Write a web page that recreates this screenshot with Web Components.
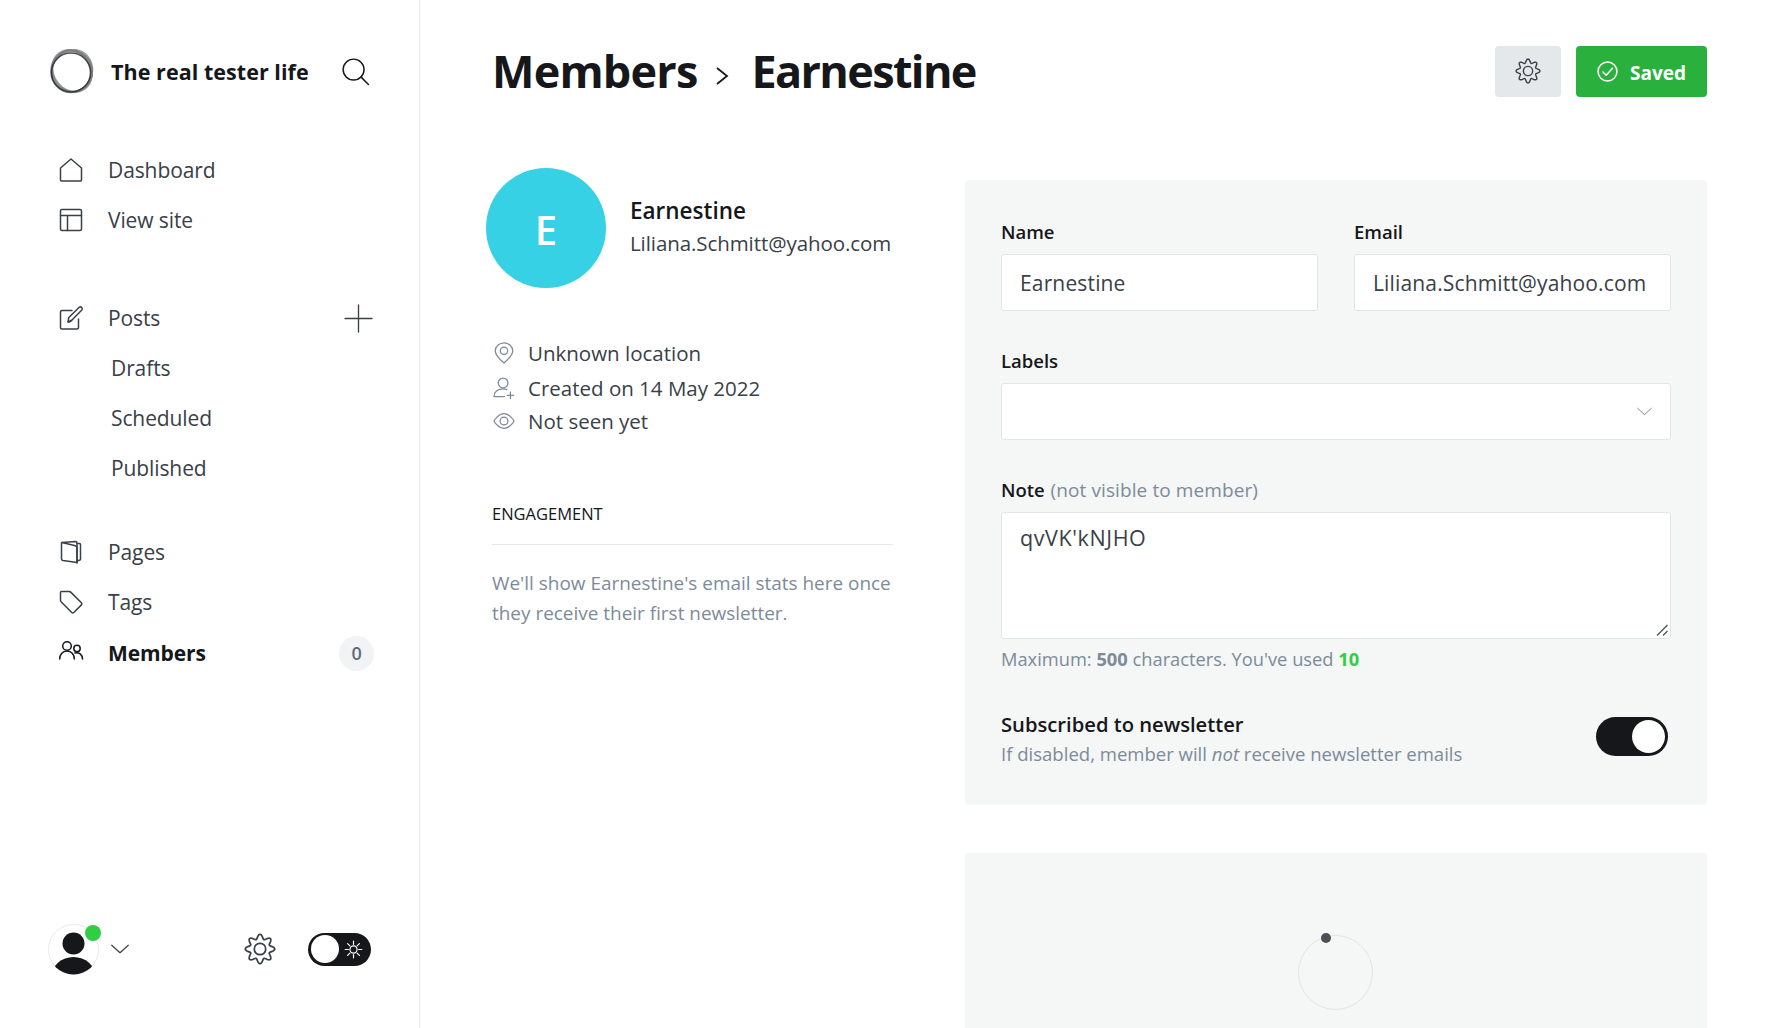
<!DOCTYPE html>
<html lang="en">
<head>
<meta charset="utf-8">
<title>Members - Earnestine</title>
<style>
  html, body { margin: 0; height: 100%; overflow: hidden; background: #fff; }
  body { font-family: "Open Sans", "Noto Sans", sans-serif; color: #15171a; }
</style>
</head>
<body>
<ghost-app>
  <side-nav slot="nav"></side-nav>
  <member-page slot="main"></member-page>
</ghost-app>

<script>
// wavy cog outline, sampled from a polar curve
const cogPath = () => {
  const pts = [];
  for (let i = 0; i < 96; i++) {
    const a = (i / 96) * Math.PI * 2;
    const r = 9.3 + 1.75 * Math.cos(8 * a);
    pts.push((12 + r * Math.cos(a)).toFixed(2) + " " + (12 + r * Math.sin(a)).toFixed(2));
  }
  return "M" + pts.join("L") + "Z";
};

const ICONS = {
  home: `<path d="M1.5 22V10L12 1l10.5 9v12a1 1 0 0 1-1 1h-19a1 1 0 0 1-1-1z"/>`,
  site: `<rect x="1.5" y="1.5" width="21" height="21" rx="1.5"/><path d="M1.5 7.5h21M8.5 7.5v15"/>`,
  posts: `<path d="M13 4.5H3a1.5 1.5 0 0 0-1.5 1.5v15.5A1.5 1.5 0 0 0 3 23h15a1.5 1.5 0 0 0 1.5-1.5V13"/><path d="M10 16l-1-.1.8-4.4L20 1.5c.8-.7 2-.7 2.7.1.7.8.7 2-.1 2.7L12.500 14.500z" /><path d="M9 16l3.500-1.500"/>`,
  pages: `<path d="M3 2.500 16.500 1.500c1 0 1.500.5 1.500 1.500v19.500L4 20.500c-1-.2-1.500-.8-1.500-1.800V3z"/><path d="M3 2.500 15.500 5.500c1.500.4 2.500 1 2.500 2.500v15"/><path d="M18 3.500h2.500c.7 0 1 .4 1 1v14.500c0 .8-.5 1.200-1.200 1.300L18 21"/>`,
  tags: `<path d="M1.500 2.500c0-.6.4-1 1-1h7.700c.6 0 1.100.2 1.500.6l10.700 10.700c.6.600.6 1.500 0 2.100l-7.600 7.600c-.6.6-1.500.6-2.100 0L2.100 11.800c-.4-.4-.6-.9-.6-1.500z"/>`,
  members: `<circle cx="8" cy="5" r="4.300"/><path d="M.7 18c0-4.500 3-8 7.300-8s7.300 3.500 7.300 8"/><circle cx="18" cy="7.500" r="3.200"/><path d="M16 12c3.800-1 7.500 1.500 7.500 6"/>`,
  search: `<circle cx="10.300" cy="10.300" r="9.300"/><path d="M17 17l6.500 6.500"/>`,
  plus: `<path d="M12 0v24M0 12h24"/>`,
  chevron: `<path d="M1 7l11 10L23 7"/>`,
  cog: `<path d="${cogPath()}"/><circle cx="12" cy="12" r="4.300"/>`,
  pin: `<path d="M12 23S2.500 14.500 2.500 9.700a9.500 8.700 0 0 1 19 0C21.500 14.500 12 23 12 23z"/><circle cx="12" cy="9.500" r="4"/>`,
  useradd: `<circle cx="11" cy="6.500" r="5.300"/><path d="M1 21.500c0-5 4-8.500 10-8.500 1.500 0 3 .2 4 .7M1 21.500h11.500M19 16.500v7M15.500 20h7"/>`,
  eye: `<path d="M1 12s4.500-8 11-8 11 8 11 8-4.500 8-11 8S1 12 1 12z"/><circle cx="12" cy="12" r="4.200"/>`,
  check: `<circle cx="12" cy="12" r="10.800"/><path d="M6.800 12.500l3.700 3.700 7.200-8"/>`,
  sun: `<circle cx="12" cy="12" r="4.500"/><path d="M12 1.500v4M12 18.500v4M1.500 12h4M18.500 12h4M4.500 4.500l3 3M16.500 16.500l3 3M19.500 4.500l-3 3M7.500 16.500l-3 3"/>`
};

class UiIcon extends HTMLElement {
  connectedCallback() {
    const name = this.getAttribute("name");
    const size = this.getAttribute("size") || 24;
    const weight = this.getAttribute("weight") || 1.5;
    this.attachShadow({mode: "open"}).innerHTML = `
      <style>
        :host { display: inline-flex; flex: none; width: ${size}px; height: ${size}px; }
        svg { width: 100%; height: 100%; overflow: visible; fill: none; stroke: currentColor; stroke-width: ${weight}; stroke-linecap: round; stroke-linejoin: round; }
      </style>
      <svg viewBox="0 0 24 24">${ICONS[name]}</svg>`;
  }
}

class GhostApp extends HTMLElement {
  constructor() {
    super();
    this.attachShadow({mode: "open"}).innerHTML = `
      <style>
        :host { display: grid; grid-template-columns: 420px 1fr; height: 100vh; overflow: hidden; }
      </style>
      <slot name="nav"></slot>
      <slot name="main"></slot>`;
  }
}

class NavItem extends HTMLElement {
  constructor() {
    super();
    this.attachShadow({mode: "open"}).innerHTML = `
      <style>
        :host { display: flex; align-items: center; height: 50px; padding-left: 59px; color: #394047; font-size: 21px; letter-spacing: -.1px; }
        :host([sub]) { padding-left: 111px; }
        :host([active]) { color: #15171a; font-weight: 700; margin-top: 1px; }
        .icon { display: inline-flex; width: 49px; flex: none; }
        :host([sub]) .icon { display: none; }
        .end { margin-left: auto; display: inline-flex; align-items: center; }
      </style>
      <span class="icon"><slot name="icon"></slot></span>
      <span><slot></slot></span>
      <span class="end"><slot name="end"></slot></span>`;
  }
}

class SideNav extends HTMLElement {
  constructor() {
    super();
    this.attachShadow({mode: "open"}).innerHTML = `
      <style>
        :host { display: flex; flex-direction: column; height: 100vh; box-sizing: border-box; border-right: 1px solid #e6e9eb; padding-top: 50px; overflow: hidden; }
        .brand { display: flex; align-items: center; height: 44px; padding-left: 49px; padding-right: 50px; }
        .logo { width: 45px; height: 45px; flex: none; margin-top: -1px; }
        .logo ellipse { fill: none; stroke: #77797c; stroke-opacity: .7; stroke-width: 2; }
        .title { margin: -2px 0 0 17px; font-size: 21.500px; font-weight: 700; letter-spacing: .05px; color: #15171a; white-space: nowrap; flex: 1; }
        .search { color: #15171a; margin-top: -2px; }
        .first { margin-top: 51px; }
        .second { margin-top: 48px; }
        .third { margin-top: 34px; }
        .plus { color: #394047; margin-right: 47px; }
        .badge { display: flex; align-items: center; justify-content: center; width: 35px; height: 35px; margin-right: 45px; border-radius: 50%; background: #f1f3f4; color: #5e6b78; font-size: 18px; font-weight: 600; }
        .foot { margin-top: auto; display: flex; align-items: center; height: 52px; padding: 0 48px 53px 48px; }
        .user { position: relative; width: 51px; height: 51px; flex: none; }
        .user svg { width: 100%; height: 100%; display: block; }
        .dot { position: absolute; right: -2px; top: 1px; width: 16px; height: 16px; border-radius: 50%; background: #30cf43; }
        .chev { margin-left: 12px; color: #394047; }
        .cog { margin-left: auto; color: #394047; margin-right: 32px; }
        .mode { width: 63px; height: 33px; box-sizing: border-box; border-radius: 17px; background: #15171a; display: flex; align-items: center; padding: 0 8px 0 3px; justify-content: space-between; color: #fff; }
        .mode i { width: 28px; height: 28px; border-radius: 50%; background: #fff; display: block; }
      </style>
      <div class="brand">
        <svg class="logo" viewBox="0 0 45 45">
          <ellipse cx="23" cy="22" rx="20" ry="21.500" transform="rotate(25 23 22)"/>
          <ellipse cx="23" cy="22" rx="18.500" ry="22" transform="rotate(-35 23 22)"/>
          <ellipse cx="23" cy="22" rx="21" ry="19.500" transform="rotate(60 23 22)"/>
          <ellipse cx="22.500" cy="22.500" rx="20.500" ry="20.500"/>
          <circle cx="22" cy="23.500" r="19.500" fill="none" stroke="#2a2c2f" stroke-opacity=".85" stroke-width="1.500"/>
        </svg>
        <span class="title">The real tester life</span>
        <ui-icon class="search" name="search" size="27" weight="1.300"></ui-icon>
      </div>
      <div class="first">
        <nav-item><ui-icon slot="icon" name="home"></ui-icon>Dashboard</nav-item>
        <nav-item><ui-icon slot="icon" name="site"></ui-icon>View site</nav-item>
      </div>
      <div class="second">
        <nav-item><ui-icon slot="icon" name="posts"></ui-icon>Posts<ui-icon class="plus" slot="end" name="plus" size="27" weight="1.200"></ui-icon></nav-item>
        <nav-item sub>Drafts</nav-item>
        <nav-item sub>Scheduled</nav-item>
        <nav-item sub>Published</nav-item>
      </div>
      <div class="third">
        <nav-item><ui-icon slot="icon" name="pages"></ui-icon>Pages</nav-item>
        <nav-item><ui-icon slot="icon" name="tags"></ui-icon>Tags</nav-item>
        <nav-item active><ui-icon slot="icon" name="members"></ui-icon>Members<span class="badge" slot="end">0</span></nav-item>
      </div>
      <div class="foot">
        <div class="user">
          <svg viewBox="0 0 51 51">
            <defs><clipPath id="uc"><circle cx="25.500" cy="25.500" r="25"/></clipPath></defs>
            <circle cx="25.500" cy="25.500" r="25" fill="#fff" stroke="#e8e8e8"/>
            <circle cx="25.500" cy="19.500" r="11" fill="#15171a"/>
            <ellipse cx="25.500" cy="53" rx="22" ry="20" fill="#15171a" clip-path="url(#uc)"/>
          </svg>
          <span class="dot"></span>
        </div>
        <ui-icon class="chev" name="chevron" size="18" weight="1.600"></ui-icon>
        <ui-icon class="cog" name="cog" size="32" weight="1.300"></ui-icon>
        <span class="mode"><i></i><ui-icon name="sun" size="19" weight="1.500"></ui-icon></span>
      </div>`;
  }
}

class PageHeader extends HTMLElement {
  constructor() {
    super();
    this.attachShadow({mode: "open"}).innerHTML = `
      <style>
        :host { display: flex; align-items: center; height: 143px; }
        h1 { margin: 0; padding-bottom: 2px; display: flex; align-items: center; font-size: 45px; font-weight: 700; letter-spacing: -.8px; color: #15171a; flex: 1; }
        .crumb { letter-spacing: -1.650px; }
        .sep { margin: 11px 22px 0 18px; color: #15171a; display: inline-flex; }
        .actions { display: flex; gap: 15px; }
        button { font: inherit; border: 0; border-radius: 4px; height: 51px; padding: 0; display: inline-flex; align-items: center; justify-content: center; }
        .cfg { width: 66px; background: #e5e8eb; color: #394047; }
        .cfg ui-icon { margin-top: -2px; }
        .saved { width: 131px; background: #2ab13d; color: #fff; font-size: 19px; font-weight: 700; gap: 12px; line-height: 1; padding-top: 3px; box-sizing: border-box; }
        .saved ui-icon { margin-top: -4px; }
      </style>
      <h1>Members<span class="sep"><svg width="14" height="20" viewBox="0 0 14 20" fill="none" stroke="currentColor" stroke-width="1.800"><path d="M2 2l10 8-10 8"/></svg></span><span class="crumb">Earnestine</span></h1>
      <div class="actions">
        <button class="cfg" aria-label="Settings"><ui-icon name="cog" size="26" weight="1.300"></ui-icon></button>
        <button class="saved"><ui-icon name="check" size="21" weight="1.700"></ui-icon>Saved</button>
      </div>`;
  }
}

class MemberSummary extends HTMLElement {
  constructor() {
    super();
    this.attachShadow({mode: "open"}).innerHTML = `
      <style>
        :host { display: block; }
        .who { display: flex; align-items: center; margin: -12px 0 0 -6px; }
        .avatar { width: 120px; height: 120px; box-sizing: border-box; padding-top: 2px; flex: none; border-radius: 50%; background: #36d1e4; color: #fff; display: flex; align-items: center; justify-content: center; font-size: 40px; font-weight: 600; }
        .text { margin: 0 0 0 24px; }
        .name { font-size: 22.500px; font-weight: 600; line-height: 30px; color: #15171a; }
        .mail { font-size: 20.500px; line-height: 34px; color: #394047; letter-spacing: -.08px; white-space: nowrap; }
        ul { list-style: none; margin: 48px 0 0 1px; padding: 0; color: #394047; font-size: 20.500px; }
        li { display: flex; align-items: center; height: 34px; }
        li:nth-child(2) { margin: 1px 0 -1px; }
        li span.ico { width: 35px; color: #7c8b9a; display: inline-flex; }
        h4 { margin: 64px 0 0 0; padding-bottom: 18px; border-bottom: 1px solid #e6e9eb; font-size: 16.500px; font-weight: 500; line-height: 24px; color: #15171a; text-transform: uppercase; }
        p { margin: 23px 0 0 0; font-size: 18.950px; line-height: 30px; color: #7c8b9a; }
      </style>
      <div class="who">
        <div class="avatar">E</div>
        <div class="text">
          <div class="name">Earnestine</div>
          <div class="mail">Liliana.Schmitt@yahoo.com</div>
        </div>
      </div>
      <ul>
        <li><span class="ico"><ui-icon name="pin" size="22" weight="1.400"></ui-icon></span>Unknown location</li>
        <li><span class="ico"><ui-icon name="useradd" size="22" weight="1.400"></ui-icon></span>Created on 14 May 2022</li>
        <li><span class="ico"><ui-icon name="eye" size="22" weight="1.400"></ui-icon></span>Not seen yet</li>
      </ul>
      <h4>Engagement</h4>
      <p>We'll show Earnestine's email stats here once they receive their first newsletter.</p>`;
  }
}

class FormField extends HTMLElement {
  constructor() {
    super();
    this.attachShadow({mode: "open"}).innerHTML = `
      <style>
        :host { display: block; margin-bottom: 39px; }
        :host([last]) { margin-bottom: 0; }
        label { display: block; height: 24px; line-height: 22px; margin-bottom: 9px; font-size: 18.500px; font-weight: 600; color: #15171a; white-space: nowrap; }
      </style>
      <label><slot name="label"></slot></label>
      <slot></slot>`;
  }
}

class TextBox extends HTMLElement {
  constructor() {
    super();
    this.attachShadow({mode: "open"}).innerHTML = `
      <style>
        :host { display: flex; align-items: center; box-sizing: border-box; height: 57px; padding: 0 18.500px 0 18px; background: #fff; border: 1px solid #e3e6e8; border-radius: 3px; font-size: 21px; letter-spacing: .15px; color: #394047; white-space: nowrap; overflow: hidden; }
        .end { margin-left: auto; display: inline-flex; color: #7c8b9a; }
      </style>
      <slot></slot><span class="end"><slot name="end"></slot></span>`;
  }
}

class SwitchToggle extends HTMLElement {
  constructor() {
    super();
    this.attachShadow({mode: "open"}).innerHTML = `
      <style>
        :host { display: block; width: 72px; height: 39px; box-sizing: border-box; padding: 3px; border-radius: 20px; background: #15171a; }
        i { display: block; width: 33px; height: 33px; margin-left: auto; border-radius: 50%; background: #fff; }
      </style>
      <i></i>`;
  }
}

class LoadSpinner extends HTMLElement {
  constructor() {
    super();
    this.attachShadow({mode: "open"}).innerHTML = `
      <style>
        :host { display: block; position: relative; width: 75px; height: 75px; box-sizing: border-box; border: 1px solid #e3e5e5; border-radius: 50%; }
        i { position: absolute; left: 22px; top: -3px; width: 10px; height: 10px; border-radius: 50%; background: #4a4f55; }
      </style>
      <i></i>`;
  }
}

class MemberForm extends HTMLElement {
  constructor() {
    super();
    this.attachShadow({mode: "open"}).innerHTML = `
      <style>
        :host { display: block; }
        .card { background: #f5f6f6; border-radius: 4px; }
        .main { box-sizing: border-box; height: 625px; padding: 41px 36px 0; }
        .pair { display: grid; grid-template-columns: 1fr 1fr; gap: 36px; }
        small { margin-left: 1px; font-weight: 400; font-size: 19px; letter-spacing: .1px; color: #7c8b9a; }
        .note { position: relative; }
        textarea { display: block; box-sizing: border-box; width: 100%; height: 127px; margin: 0; padding: 10px 18px; resize: none; background: #fff; border: 1px solid #e3e6e8; border-radius: 3px; font: inherit; font-size: 21.500px; letter-spacing: .6px; color: #394047; outline: none; }
        .grip { position: absolute; right: 3px; bottom: 3px; width: 12px; height: 12px; stroke: #4a4f55; stroke-width: 1.200; fill: none; }
        .hint { height: 24px; line-height: 22px; margin-top: 9px; font-size: 18.300px; color: #7c8b9a; white-space: nowrap; }
        .hint b { font-weight: 700; }
        .hint em { font-style: normal; font-weight: 700; color: #30cf43; }
        .sub { display: flex; align-items: flex-start; justify-content: space-between; margin-top: 41px; padding-right: 3px; }
        .sub h5 { margin: 0; height: 24px; line-height: 23px; font-size: 20.200px; font-weight: 600; color: #15171a; }
        .sub p { margin: 6px 0 0 0; height: 24px; line-height: 22px; font-size: 18.550px; color: #7c8b9a; white-space: nowrap; }
        switch-toggle { margin-top: 4px; }
        .busy { display: flex; justify-content: center; height: 400px; margin-top: 48px; padding: 82px 2px 0 0; box-sizing: border-box; }
      </style>
      <section class="card main">
        <div class="pair">
          <form-field><span slot="label">Name</span><text-box>Earnestine</text-box></form-field>
          <form-field><span slot="label">Email</span><text-box>Liliana.Schmitt@yahoo.com</text-box></form-field>
        </div>
        <form-field>
          <span slot="label">Labels</span>
          <text-box><ui-icon slot="end" name="chevron" size="15" weight="1.600"></ui-icon></text-box>
        </form-field>
        <form-field last>
          <span slot="label">Note <small>(not visible to member)</small></span>
          <div class="note">
            <textarea>qvVK'kNJHO</textarea>
            <svg class="grip" viewBox="0 0 12 12"><path d="M1 11.500 11.500 1M7 11.500 11.500 7"/></svg>
          </div>
          <div class="hint">Maximum: <b>500</b> characters. You've used <em>10</em></div>
        </form-field>
        <div class="sub">
          <div>
            <h5>Subscribed to newsletter</h5>
            <p>If disabled, member will <i>not</i> receive newsletter emails</p>
          </div>
          <switch-toggle></switch-toggle>
        </div>
      </section>
      <section class="card busy"><load-spinner></load-spinner></section>`;
  }
}

class MemberPage extends HTMLElement {
  constructor() {
    super();
    this.attachShadow({mode: "open"}).innerHTML = `
      <style>
        :host { display: block; padding: 0 72px 0 72px; height: 100vh; overflow: hidden; }
        .cols { display: grid; grid-template-columns: 401px 742px; justify-content: space-between; margin-top: 37px; }
      </style>
      <page-header></page-header>
      <div class="cols">
        <member-summary></member-summary>
        <member-form></member-form>
      </div>`;
  }
}

customElements.define("ui-icon", UiIcon);
customElements.define("nav-item", NavItem);
customElements.define("side-nav", SideNav);
customElements.define("ghost-app", GhostApp);
customElements.define("page-header", PageHeader);
customElements.define("member-summary", MemberSummary);
customElements.define("form-field", FormField);
customElements.define("text-box", TextBox);
customElements.define("switch-toggle", SwitchToggle);
customElements.define("load-spinner", LoadSpinner);
customElements.define("member-form", MemberForm);
customElements.define("member-page", MemberPage);
</script>
</body>
</html>
